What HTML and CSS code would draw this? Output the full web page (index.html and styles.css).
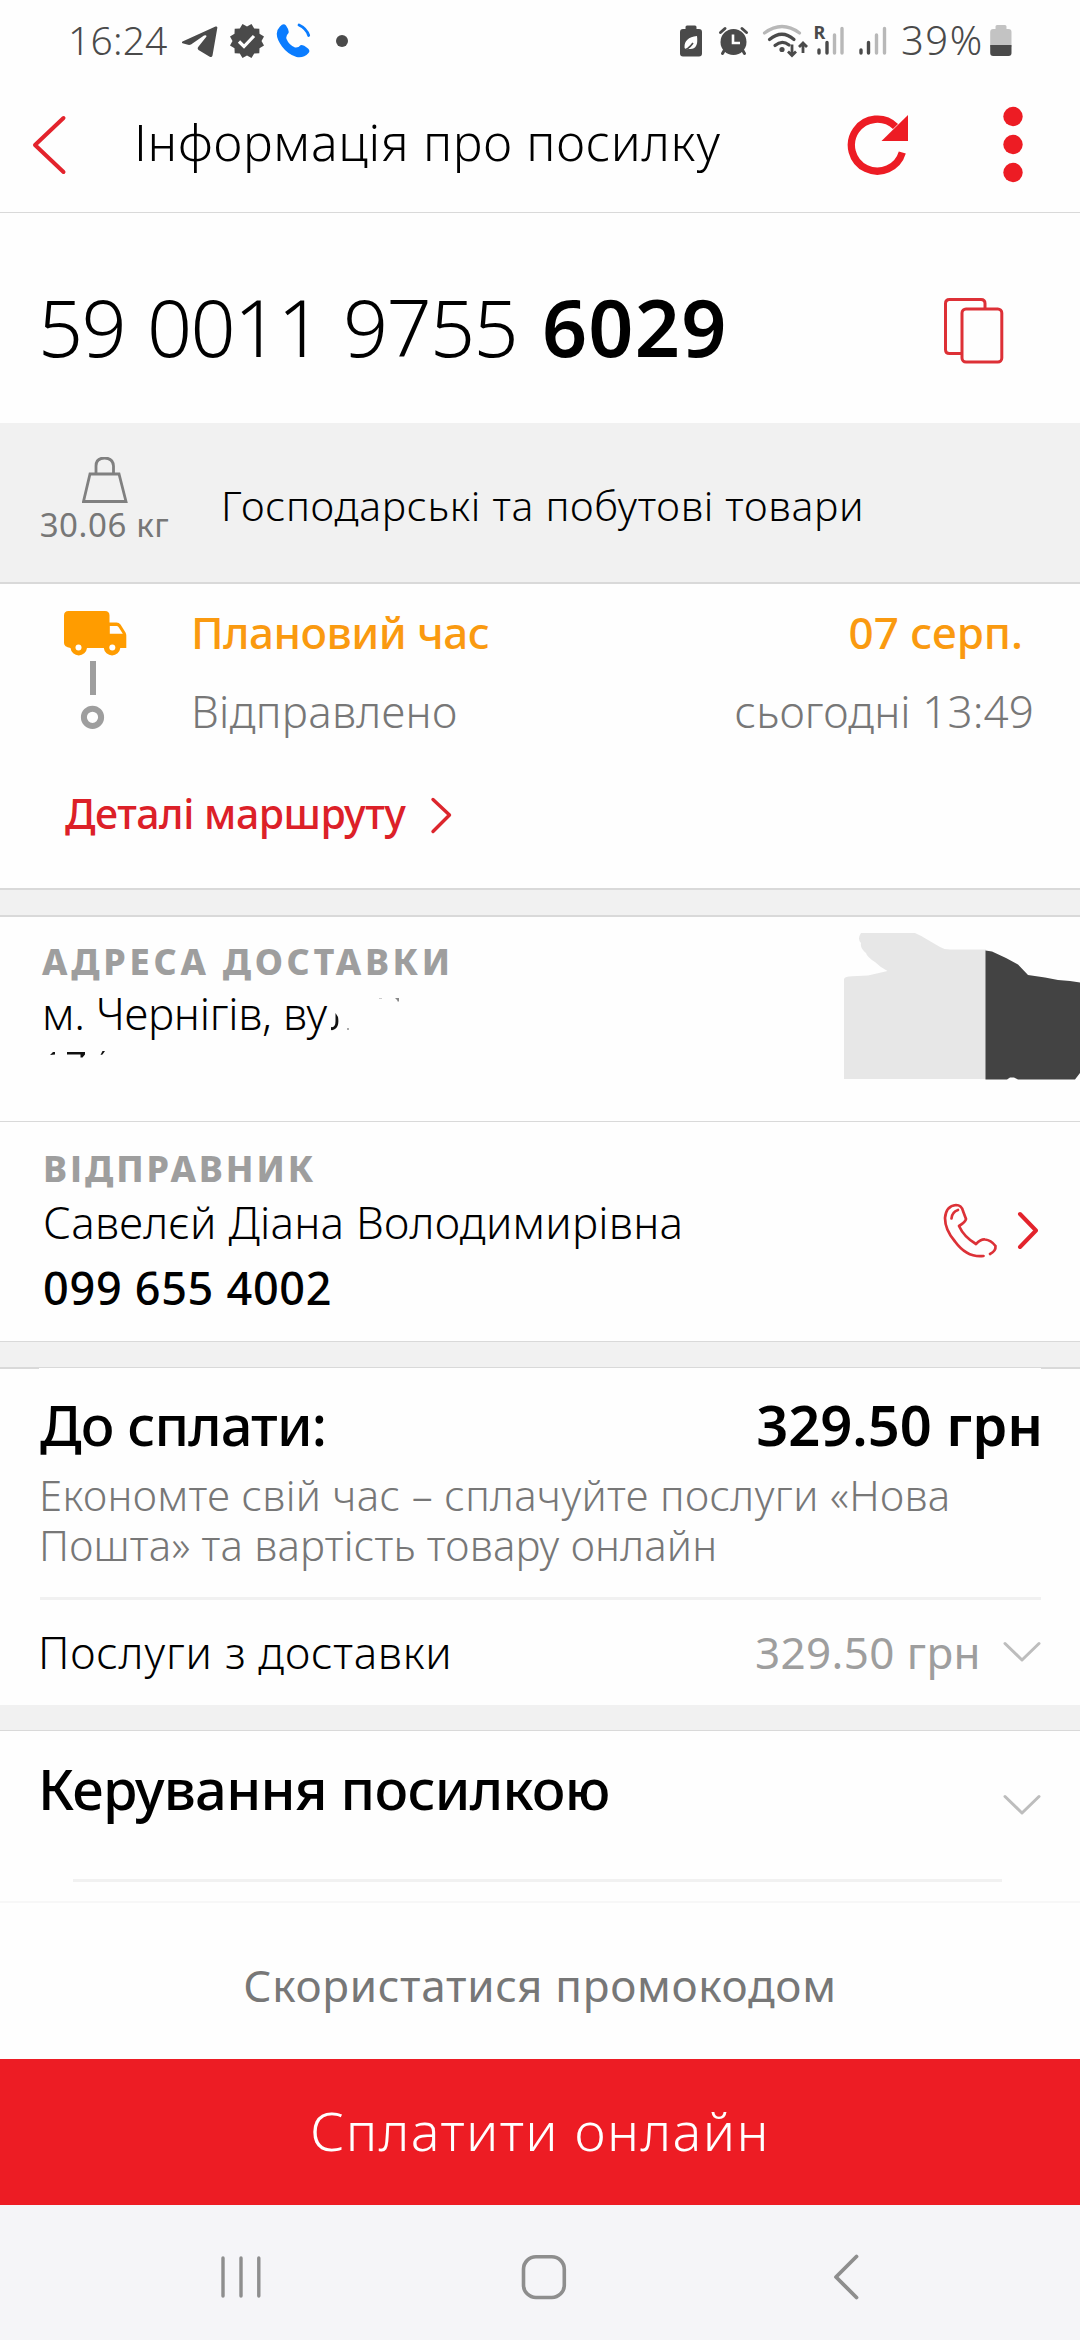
FILE: index.html
```
<!DOCTYPE html>
<html lang="uk">
<head>
<meta charset="utf-8">
<title>Інформація про посилку</title>
<link rel="stylesheet" href="styles.css">
</head>
<body>
<div class="screen">
  <div class="status">
    <span class="clock">16:24</span>
    <svg class="st-telegram" width="36" height="36" viewBox="182 24 36 36"><path fill="#4a4a4a" d="M182.500 42.500L215.500 27.500Q217.600 27 217.300 29L212.500 56.500Q211.800 59 209.300 57.500L198.500 51Q197 49.500 198.200 48L206.500 37.500Q206.500 35.500 204 36.500L191 45.500Q189.500 46.200 188 45.800L182.500 44.200Q181.200 43.400 182.500 42.500Z"/></svg>
    <svg class="st-badge" width="36" height="36" viewBox="-18 -18 36 36"><path fill="#4a4a4a" d="M0-14.500L4.500-17L7.200-12.600L12.300-12.300L12.500-7.200L17-4.600L14.500 0L17 4.600L12.500 7.200L12.300 12.300L7.200 12.600L4.500 17L0 14.500L-4.500 17L-7.200 12.600L-12.300 12.300L-12.500 7.200L-17 4.600L-14.500 0L-17-4.600L-12.500-7.200L-12.300-12.300L-7.200-12.600L-4.500-17Z"/><path fill="none" stroke="#fff" stroke-width="3.200" d="M-8 .5L-3 5.500L7-5"/></svg>
    <svg class="st-call" width="36" height="36" viewBox="276 24 36 36"><path fill="#0a7cff" d="M280 27.500Q283.500 23.500 286 26.500Q289.500 31.500 288.500 34Q285.500 37 286.500 40Q289 46 295 48.500Q298.500 49 300.500 46.200Q303 45.500 308 49.500Q310.500 51.500 308.500 54Q303.500 59.500 296.500 58Q288 55.500 282 47.500Q276.500 40 276.800 34.500Q277 30.500 280 27.500Z"/><path fill="none" stroke="#0a7cff" stroke-width="2.800" stroke-linecap="round" d="M299 26Q306.500 29.500 308.700 36.500"/></svg>
    <svg class="st-dot" width="12" height="12" viewBox="0 0 12 12"><circle cx="6" cy="6" r="6" fill="#4a4a4a"/></svg>

    <svg class="st-system" width="216" height="40" viewBox="676 22 216 40">
      <g fill="#4a4a4a">
        <path d="M687 26.500h8q1.500 0 1.500 1.500v2h2.500q3 0 3 3v21.500q0 3-3 3h-16q-3 0-3-3V33q0-3 3-3h2.500v-2q0-1.500 1.500-1.500z"/>
        <circle cx="733.500" cy="43" r="13"/>
      </g>
      <path fill="#fff" d="M684.500 48.500q-.5-10 12.500-11.500q1.800 14-8 13q-2.500 0-3.500 1z"/>
      <path fill="none" stroke="#4a4a4a" stroke-width="1.600" d="M683 51q5 0 10-7"/>
      <path fill="none" stroke="#fff" stroke-width="2.600" d="M733 35.500v8.500h7"/>
      <path fill="none" stroke="#4a4a4a" stroke-width="3" stroke-linecap="round" d="M720.500 33.500l4.500-4M746.500 33.500l-4.500-4M724.500 51l-2 3.500M742.500 51l2 3.500"/>
      <g fill="none" stroke-width="3.200" stroke-linecap="round">
        <path stroke="#b8b8b8" d="M764.500 34Q782 21 799.500 34"/>
        <path stroke="#4a4a4a" d="M769.500 40.500Q782 30 794 40.500M775 46.500Q782 40.500 789 46"/>
      </g>
      <circle cx="782" cy="50.500" r="2.600" fill="#4a4a4a"/>
      <path fill="none" stroke="#4a4a4a" stroke-width="2.800" d="M792 45.500v11M788 52.500l4 4l4-4M803 54V44M799 48l4-4l4 4"/>
      <text x="813.500" y="40" class="roam">R</text>
      <g stroke-width="3.400" stroke-linecap="round">
        <path stroke="#4a4a4a" d="M819 51v3M827 43.500v10.500M861 51v3M868.500 43.500v10.500"/>
        <path stroke="#b8b8b8" d="M834.500 36v18M842 29.500v24.500M876.500 36v18M884.500 29.500v24.500"/>
      </g>
    </svg>
    <span class="percent">39%</span>
    <svg class="st-battery" width="22" height="32" viewBox="990 26 22 32"><path fill="#c3c3c3" d="M997 26h8q1.500 0 1.500 1.500V30h2q3 0 3 3v15h-21.300V33q0-3 3-3h2.300v-2.500q0-1.500 1.500-1.500z"/><path fill="#4a4a4a" d="M990.200 46h21.300v8q0 3-3 3h-15.300q-3 0-3-3z"/></svg>
  </div>

  <header class="header">
    <svg class="back" width="36" height="62" viewBox="31 114 36 62"><path fill="none" stroke="#e3232c" stroke-width="4" stroke-linecap="round" stroke-linejoin="round" d="M63.500 118L35 145L63.500 172"/></svg>
    <h1 class="title">Інформація про посилку</h1>
    <svg class="refresh" width="62" height="62" viewBox="847 114 62 62"><path fill="none" stroke="#ed1c24" stroke-width="7.300" d="M902.300 152.500A26 26 0 1 1 895.500 126.500"/><path fill="#ed1c24" d="M908 115v26h-26.500z"/></svg>
    <svg class="more" width="20" height="78" viewBox="0 0 20 78"><g fill="#ed1c24"><circle cx="10" cy="10.500" r="9.700"/><circle cx="10" cy="38.500" r="9.700"/><circle cx="10" cy="66.500" r="9.700"/></g></svg>
  </header>

  <section class="number">
    <div class="ttn">59 0011 9755<b>6029</b></div>
    <svg class="copy" width="60" height="66" viewBox="944 298 60 66"><g fill="none" stroke="#dd3036" stroke-width="3"><path d="M962 353.500h-12.500q-4 0-4-4v-46q0-4 4-4H981q4 0 4 4V309"/><rect x="962" y="309" width="39.800" height="53" rx="4"/></g></svg>
  </section>

  <section class="cargo">
    <div class="weight">
      <svg width="46" height="46" viewBox="81 457 46 46"><g fill="none" stroke="#808080" stroke-width="2.800"><path d="M89 474h29l7 27.500H82.500z"/><path d="M95 474v-8q0-8 8.500-8t9 8v8"/></g></svg>
      <span>30.06 кг</span>
    </div>
    <div class="kind">Господарські та побутові товари</div>
  </section>

  <section class="tracking">
    <svg class="route" width="195" height="158" viewBox="0 584 195 158">
      <path fill="#ff9c00" fill-rule="evenodd" d="M68.500 611H105q4.500 0 4.500 4.500V622.500h7q2.500 0 4 2l5 8q.8 1.500.8 3V648h-6a8.300 8.300 0 0 1-16.500 0H87a8.300 8.300 0 0 1-16.500 0Q64 647 64 643V615.500Q64 611 68.500 611zM109.800 626v7.800h13L118.500 627q-.7-1-2-1z"/>
      <circle cx="78.500" cy="647.500" r="3" fill="#fff"/><circle cx="112.300" cy="647.500" r="3" fill="#fff"/>
      <path fill="#9e9e9e" d="M90 661h6v34h-6z"/>
      <circle cx="92.500" cy="717.300" r="8.600" fill="none" stroke="#9e9e9e" stroke-width="6"/>
    </svg>
    <span class="plan">Плановий час</span><span class="plan plan-date">07 серп.</span>
    <span class="sent">Відправлено</span><span class="sent sent-date">сьогодні 13:49</span>
    <a class="details"><span>Деталі маршруту</span><svg width="24" height="40" viewBox="427 795 24 40"><path fill="none" stroke="#dc262d" stroke-width="3.400" stroke-linecap="round" stroke-linejoin="round" d="M431 799.500L447.500 815L431 831.500"/></svg></a>
  </section>

  <div class="band band-top"></div>

  <section class="address">
    <div class="address-text">
      <h2 class="label">АДРЕСА ДОСТАВКИ</h2>
      <div class="street">м. Чернігів, ву</div>
    </div>
    <svg class="mask" width="236" height="148" viewBox="844 932 236 148">
      <path fill="#e7e7e7" d="M861 933H915Q922 936 928 940L940 947Q944 949.500 950 949.500H986V1079H844V979Q845 976.500 852 976.300L868 975.500Q879 973 887.500 971Q880 967 875 962Q867 957 866 953Q860 948 861 943Q857 939 861 933Z"/>
      <path fill="#434343" d="M985.500 950.500L992 951.500L1006 958L1018 964.500L1028 975L1045 977.500L1058 980L1070 981L1080 982.500V1073L1075 1079.500H1018L1014 1077.500H1010L1007 1079.500H985.500Z"/>
    </svg>
    <svg class="specks" width="360" height="64" viewBox="45 996 360 64">
      <path fill="#ccc" d="M379 998h3v1h-3z"/><path fill="#888" d="M395 998h4v3l-1 1l-1-2z"/>
      <path fill="#111" d="M331 1027q4.500 1 4.500-6v-8l2.500 4q1.500 9-3 12q-2 1.500-4 1z"/>
      <path fill="#aaa" d="M347 1028h2v2h-2z"/>
      <path fill="#111" d="M50 1055l3-3h2v2.500zM67 1052h18v2.500l-2.500 3h-2v-3H67zM100.500 1055l2-4h2.500l-2.500 3.500z"/>
    </svg>
  </section>

  <section class="sender">
    <div>
      <h2 class="label label-sender">ВІДПРАВНИК</h2>
      <div class="name">Савелєй Діана Володимирівна</div>
      <div class="phone">099 655 4002</div>
    </div>
    <svg class="call" width="96" height="60" viewBox="942 1202 96 60"><g fill="none" stroke="#dc3137" stroke-width="2.700" stroke-linecap="round" stroke-linejoin="round"><path d="M983.500 1256Q967 1258 955 1241.500Q945 1230 945 1218Q946 1206 956 1205Q961.500 1205 963 1211L966 1219Q965.500 1222 959 1226Q964 1237 976 1244Q981 1239 985 1239.500Q991 1240 995.500 1246Q996 1251 990 1254"/><path d="M951.500 1218.500Q952 1212 958 1210"/></g><path fill="none" stroke="#e3232c" stroke-width="4" stroke-linecap="round" stroke-linejoin="round" d="M1020 1214L1036 1230.500L1020 1247"/></svg>
  </section>

  <div class="band"></div>

  <section class="pay">
    <div class="total"><span class="total-label">До сплати:</span><span class="total-sum">329.50 грн</span></div>
    <p class="hint"><span>Економте свій час – сплачуйте послуги «Нова</span><br>Пошта» та вартість товару онлайн</p>
    <div class="service">
      <span class="service-name">Послуги з доставки</span><span class="service-sum">329.50 грн</span>
      <svg class="chev" width="38" height="22" viewBox="0 0 38 22"><path fill="none" stroke="#bdbdbd" stroke-width="3" stroke-linecap="round" stroke-linejoin="round" d="M2 2.500L19 19L36 2.500"/></svg>
    </div>
  </section>

  <div class="band band-plain"></div>

  <section class="manage">
    <div class="manage-row"><h2 class="manage-title">Керування посилкою</h2>
      <svg class="chev chev-low" width="38" height="22" viewBox="0 0 38 22"><path fill="none" stroke="#bdbdbd" stroke-width="3" stroke-linecap="round" stroke-linejoin="round" d="M2 2.500L19 19L36 2.500"/></svg>
    </div>
    <div class="rule"></div>
  </section>

  <div class="promo">Скористатися промокодом</div>
  <div class="submit">Сплатити онлайн</div>

  <nav class="nav">
    <svg width="42" height="46" viewBox="220 2254 42 46"><path stroke="#8e8e8e" stroke-width="3.400" stroke-linecap="round" d="M223 2258v38M241 2258v38M258.800 2258v38"/></svg>
    <svg width="46" height="46" viewBox="520 2254 46 46"><rect x="522.500" y="2256.700" width="40.800" height="40.800" rx="12.500" fill="none" stroke="#8e8e8e" stroke-width="3.600"/></svg>
    <svg width="28" height="48" viewBox="832 2253 28 48"><path fill="none" stroke="#8e8e8e" stroke-width="3.800" stroke-linecap="round" stroke-linejoin="round" d="M856.500 2256.500L836 2277L856.500 2297.500"/></svg>
  </nav>
</div>
</body>
</html>
```
FILE: styles.css
```
* { box-sizing: border-box; }
body { margin: 0; background: #fff; }
svg { display: block; flex: none; }
h1, h2, p { margin: 0; font-weight: inherit; }

.screen {
  width: 1080px;
  height: 2340px;
  overflow: hidden;
  display: flex;
  flex-direction: column;
  font-family: "Noto Sans", "Open Sans", sans-serif;
  font-weight: 340;
  color: #000;
  background: #fefefe;
  white-space: nowrap;
}
.screen > * { flex: none; }

/* status bar */
.status {
  height: 70px;
  padding: 12px 68px 0 68px;
  display: flex;
  align-items: center;
  color: #4a4a4a;
  font-size: 39px;
  line-height: 60px;
}
.clock { width: 114px; margin-top: -3px; letter-spacing: .2px; }
.st-badge { margin-left: 11px; }
.st-call { margin-left: 11px; }
.st-dot { margin-left: 24px; }
.st-system { margin-left: auto; }
.percent { width: 88px; margin: -3px 0 0 9px; letter-spacing: 1.5px; font-size: 40px; }
.st-battery { margin-left: 1px; }
.roam { font: 700 18px "Noto Sans", sans-serif; fill: #4a4a4a; }

/* header */
.header {
  height: 143px;
  border-bottom: 1px solid #d9d9d9;
  padding: 8px 57px 0 31px;
  display: flex;
  align-items: center;
}
.title {
  flex: 1;
  margin: -6px 0 0 67px;
  font-size: 50px;
  letter-spacing: .7px;
}
.more { margin-left: 94px; }

/* parcel number */
.number {
  height: 210px;
  padding: 17px 76px 0 38px;
  display: flex;
  align-items: center;
  justify-content: space-between;
}
.ttn { font-size: 79px; line-height: 100px; letter-spacing: -1.6px; word-spacing: 3px; }
.ttn b { margin-left: 25px; font-weight: 600; letter-spacing: 1.2px; }
.copy { margin-top: 8px; }

.cargo {
  height: 161px;
  background: #f1f1f1;
  border-bottom: 2px solid #d9d9d9;
  display: flex;
  padding-left: 40px;
}
.weight {
  width: 129px;
  padding-top: 34px;
  display: flex;
  flex-direction: column;
  align-items: center;
  color: #777;
  font-size: 33px;
  font-weight: 430;
  line-height: 42px;
  letter-spacing: .6px;
}
.weight span { margin-top: 1px; }
.kind {
  margin-left: 52px;
  padding-top: 3px;
  line-height: 159px;
  font-size: 41px;
  letter-spacing: .7px;
}

/* tracking */
.tracking {
  height: 304px;
  display: grid;
  grid-template-columns: 191px 1fr auto;
  grid-template-rows: 96px 62px 141px;
  align-items: center;
  font-size: 44px;
  line-height: 60px;
}
.route { grid-row: 1 / 3; }
.plan { color: #fa9a10; font-weight: 470; letter-spacing: -.5px; }
.plan-date { padding-right: 57px; text-align: right; letter-spacing: 0; }
.sent { color: #777; letter-spacing: .3px; }
.sent-date { padding-right: 46px; text-align: right; letter-spacing: .1px; }
.details {
  grid-column: 1 / 4;
  display: flex;
  align-items: center;
  gap: 23px;
  padding-left: 65px;
  color: #dc2028;
  font-size: 41px;
  font-weight: 470;
  letter-spacing: -.45px;
}
.details svg { margin-top: 5px; }

.band {
  height: 27px;
  background: #f1f1f1;
  border-top: 1px solid #d9d9d9;
  border-bottom: 1px solid #d9d9d9;
}
.band-top { height: 29px; border-width: 2px 0; }
.band-plain { height: 26px; border-top: 0; }

/* delivery address */
.address {
  position: relative;
  height: 205px;
  border-bottom: 1px solid #d9d9d9;
  display: flex;
  justify-content: space-between;
}
.address-text { padding: 22px 0 0 42px; }
.label {
  color: #9e9e9e;
  font-size: 36px;
  font-weight: 800;
  line-height: 45px;
  letter-spacing: 3.7px;
}
.label-sender { letter-spacing: 2.95px; }
.street { font-size: 44px; line-height: 59px; letter-spacing: -.25px; }
.mask { margin-top: 15px; }
/* leftovers of the erased part of the address */
.specks { position: absolute; left: 45px; top: 79px; }

/* sender */
.sender {
  height: 219px;
  padding: 24px 42px 0 43px;
  display: flex;
  justify-content: space-between;
}
.name { font-size: 44px; line-height: 62px; letter-spacing: .25px; }
.phone { font-size: 45px; line-height: 69px; font-weight: 480; letter-spacing: .7px; }
.call { margin-top: 56px; }

/* payment */
.pay {
  height: 337px;
  padding: 16px 39px 0 40px;
  background: linear-gradient(#d9d9d9, #d9d9d9) 0 0 / 39px 1px no-repeat,
              linear-gradient(#d9d9d9, #d9d9d9) 100% 0 / 39px 1px no-repeat;
}
.total {
  display: flex;
  justify-content: space-between;
  font-size: 56px;
  line-height: 80px;
}
.total-label { font-weight: 470; letter-spacing: -.9px; }
.total-sum { font-weight: 600; margin-right: -2px; }
.hint {
  margin: 6px 0 0 -1px;
  color: #777;
  font-size: 42px;
  line-height: 50px;
  letter-spacing: .2px;
}
.hint span { letter-spacing: .35px; }
.service {
  height: 106px;
  margin-top: 27px;
  border-top: 3px solid #f1f1f1;
  display: flex;
  align-items: center;
  font-size: 44px;
  line-height: 60px;
}
.service-name { flex: 1; margin-left: -2px; letter-spacing: .75px; }
.service-sum { color: #9e9e9e; font-weight: 430; letter-spacing: .4px; margin-right: 22px; }

/* parcel management */
.manage { height: 172px; border-bottom: 2px solid #f7f7f7; }
.manage-row {
  height: 113px;
  padding: 0 39px 0 38px;
  display: flex;
  align-items: center;
  justify-content: space-between;
}
.manage-title { font-size: 56px; font-weight: 470; letter-spacing: -.75px; }
.chev-low { margin-top: 35px; }
.rule { height: 3px; margin: 35px 78px 0 73px; background: #f1f1f1; }

.promo {
  height: 156px;
  padding-top: 8px;
  line-height: 148px;
  text-align: center;
  color: #777;
  font-size: 44px;
  font-weight: 430;
  letter-spacing: .7px;
}
.submit {
  height: 146px;
  line-height: 142px;
  text-align: center;
  background: #ed1c24;
  color: #fff;
  font-size: 54px;
  letter-spacing: 1.4px;
}

/* system navigation */
.nav {
  height: 135px;
  padding: 8px 220px 0;
  background: #f5f5f8;
  display: flex;
  align-items: center;
  justify-content: space-between;
}
.nav svg:nth-child(2) { margin-left: -6px; }
```
